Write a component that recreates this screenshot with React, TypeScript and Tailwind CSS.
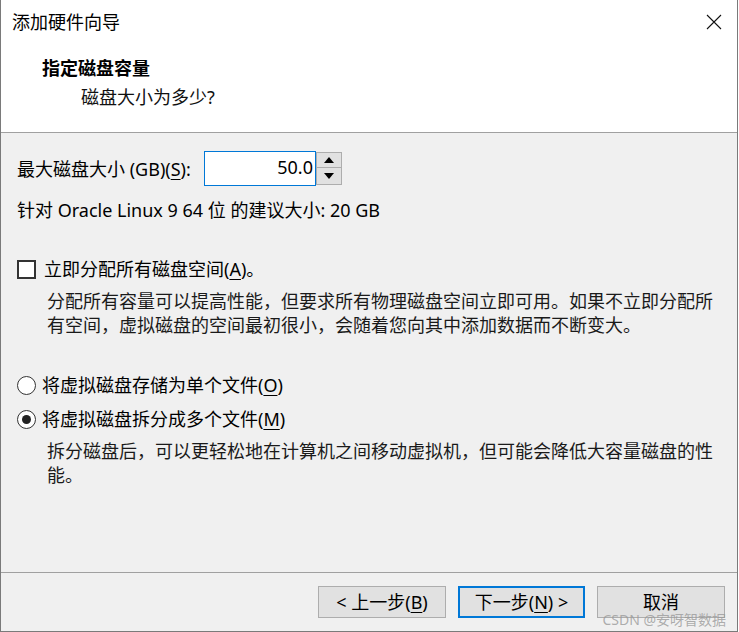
import React from 'react';

const U: React.FC<{ children: React.ReactNode }> = ({ children }) => (
  <span className="underline underline-offset-[3px] decoration-1">{children}</span>
);

const Radio: React.FC<{ checked?: boolean; children: React.ReactNode }> = ({ checked, children }) => (
  <div className="flex items-center h-6">
    <span className="w-[19px] h-[19px] rounded-full border-[1.5px] border-[#333] bg-white flex items-center justify-center">
      {checked && <span className="w-[9px] h-[9px] rounded-full bg-[#222]" />}
    </span>
    <span className="ml-[6px]">{children}</span>
  </div>
);

const Btn: React.FC<{ primary?: boolean; children: React.ReactNode }> = ({ primary, children }) => (
  <div
    className={
      'h-[32px] flex items-center justify-center bg-[#e1e1e1] ' +
      (primary ? 'w-[127px] border-2 border-[#0078d7]' : 'w-[128px] border border-[#adadad]')
    }
  >
    <span className="leading-[18px]">{children}</span>
  </div>
);

export default function App() {
  return (
    <div className="w-[739px] h-[632px] bg-white">
      <div className="relative w-[738px] h-[632px] flex flex-col border-x border-b border-[#7a7a7a] text-[18px] text-black font-['Noto_Sans','Noto_Sans_CJK_SC',sans-serif]">
        {/* title bar + header */}
        <div className="h-[133px] bg-white border-b border-[#a0a0a0] shrink-0">
          <div className="h-[44px] flex items-center justify-between pl-[11px] pr-[15px]">
            <span className="leading-6">添加硬件向导</span>
            <svg width="16" height="16" viewBox="0 0 16 16" className="text-[#111]">
              <path d="M1 1 L15 15 M15 1 L1 15" stroke="currentColor" strokeWidth="1.1" fill="none" />
            </svg>
          </div>
          <div className="pt-[12px] pl-[41px] leading-6 font-bold">指定磁盘容量</div>
          <div className="mt-[5px] pl-[80px] leading-6 text-[#111]">磁盘大小为多少?</div>
        </div>

        {/* body */}
        <div className="flex-1 bg-[#f0f0f0] px-4 border-b border-[#a0a0a0]">
          <div className="mt-[18px] flex items-center">
            <span className="w-[187px] leading-6">
              最大磁盘大小 (GB)(<U>S</U>):
            </span>
            <div className="w-[112px] h-[35px] bg-white border border-[#0078d7] flex items-center justify-end pr-[2px] pb-[3px]">
              50.0
            </div>
            <div className="w-[26px] h-[33px] flex flex-col">
              <div className="h-[16px] bg-[#e1e1e1] border border-[#adadad] flex items-center justify-center">
                <svg width="10" height="6" viewBox="0 0 10 6"><path d="M0 6 L5 0 L10 6 Z" fill="#000" /></svg>
              </div>
              <div className="h-[17px] bg-[#e1e1e1] border border-t-0 border-[#adadad] flex items-center justify-center">
                <svg width="10" height="6" viewBox="0 0 10 6"><path d="M0 0 L10 0 L5 6 Z" fill="#000" /></svg>
              </div>
            </div>
          </div>

          <div className="mt-[12px] leading-6">针对 Oracle Linux 9 64 位 的建议大小: 20 GB</div>

          <div className="mt-[35px] flex items-center h-6">
            <span className="w-[19px] h-[19px] border-2 border-[#333] bg-white" />
            <span className="ml-2">
              立即分配所有磁盘空间(<U>A</U>)。
            </span>
          </div>
          <p className="mt-2 ml-[30px] w-[672px] leading-6 text-[#1a1a1a]">
            分配所有容量可以提高性能，但要求所有物理磁盘空间立即可用。如果不立即分配所有空间，虚拟磁盘的空间最初很小，会随着您向其中添加数据而不断变大。
          </p>

          <div className="mt-[36px]">
            <Radio>
              将虚拟磁盘存储为单个文件(<U>O</U>)
            </Radio>
          </div>
          <div className="mt-[10px]">
            <Radio checked>
              将虚拟磁盘拆分成多个文件(<U>M</U>)
            </Radio>
          </div>
          <p className="mt-2 ml-[30px] w-[672px] leading-6 text-[#1a1a1a]">
            拆分磁盘后，可以更轻松地在计算机之间移动虚拟机，但可能会降低大容量磁盘的性能。
          </p>
        </div>

        {/* footer */}
        <div className="h-[58px] shrink-0 bg-[#f0f0f0] flex justify-end items-start pt-[13px] pr-[12px] gap-3">
          <Btn>
            &lt; 上一步(<U>B</U>)
          </Btn>
          <Btn primary>
            下一步(<U>N</U>) &gt;
          </Btn>
          <Btn>取消</Btn>
        </div>

        <span className="absolute right-[11px] bottom-[3px] text-[14px] leading-4 text-[#9a9a9a]/80">
          CSDN @安呀智数据
        </span>
      </div>
    </div>
  );
}
